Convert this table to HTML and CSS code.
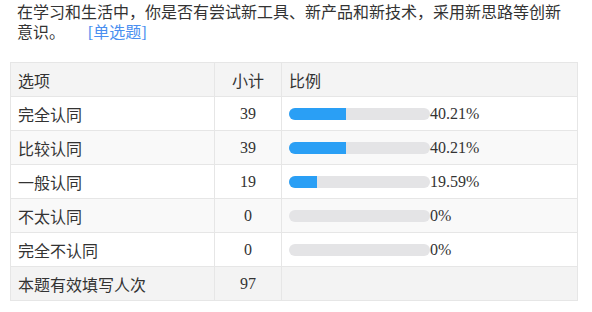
FILE: index.html
```html
<!DOCTYPE html>
<html lang="zh">
<head>
<meta charset="utf-8">
<link rel="stylesheet" href="styles.css">
</head>
<body>
<div class="title">在学习和生活中，你是否有尝试新工具、新产品和新技术，采用新思路等创新意识。<span class="qtype">[单选题]</span></div>
<table class="stats">
  <colgroup><col class="c1"><col class="c2"><col class="c3"></colgroup>
  <thead>
    <tr><th class="opt">选项</th><th class="num">小计</th><th class="opt">比例</th></tr>
  </thead>
  <tbody>
    <tr><td>完全认同</td><td class="num">39</td><td><div class="ratio"><div class="bar"><div class="fill" style="width:40.21%"></div></div><span>40.21%</span></div></td></tr>
    <tr class="alt"><td>比较认同</td><td class="num">39</td><td><div class="ratio"><div class="bar"><div class="fill" style="width:40.21%"></div></div><span>40.21%</span></div></td></tr>
    <tr><td>一般认同</td><td class="num">19</td><td><div class="ratio"><div class="bar"><div class="fill" style="width:19.59%"></div></div><span>19.59%</span></div></td></tr>
    <tr class="alt"><td>不太认同</td><td class="num">0</td><td><div class="ratio"><div class="bar"><div class="fill" style="width:0%"></div></div><span>0%</span></div></td></tr>
    <tr><td>完全不认同</td><td class="num">0</td><td><div class="ratio"><div class="bar"><div class="fill" style="width:0%"></div></div><span>0%</span></div></td></tr>
    <tr class="total"><td>本题有效填写人次</td><td class="num">97</td><td></td></tr>
  </tbody>
</table>
</body>
</html>
```
FILE: styles.css
```css
html, body {
  margin: 0;
  padding: 0;
  background: #fff;
}
body {
  font-family: "Liberation Serif", "Times New Roman", "Noto Sans CJK SC", serif;
  font-size: 16px;
  color: #333;
}
.title {
  padding: 3px 20px 0 17px;
  line-height: 20px;
  height: 62px;
  box-sizing: border-box;
}
.qtype {
  color: #4a8ff0;
  margin-left: 23px;
}
.stats {
  margin-left: 10px;
  width: 568px;
  border-collapse: collapse;
  table-layout: fixed;
}
.c1 { width: 204px; }
.c2 { width: 67px; }
.stats th, .stats td {
  border: 1px solid #e6e6e6;
  height: 33px;
  padding: 0 0 0 7px;
  font-weight: normal;
  text-align: left;
  vertical-align: middle;
}
.stats thead tr { background: #f4f4f4; }
.stats tr.alt { background: #f9f9f9; }
.stats tr.total { background: #f3f3f3; }
.stats .num {
  text-align: center;
  padding: 0;
}
.ratio {
  display: flex;
  align-items: center;
}
.bar {
  width: 141px;
  height: 12px;
  border-radius: 6px;
  background: #e4e4e6;
  overflow: hidden;
  flex: none;
}
.fill {
  height: 100%;
  background: #2a9ff5;
}
```
